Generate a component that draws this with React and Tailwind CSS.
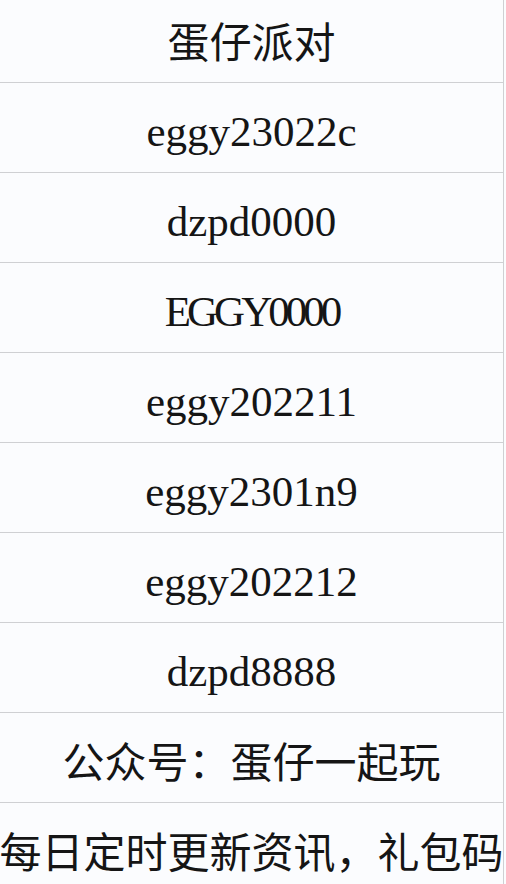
import React from 'react';

const rows = [
     { text: '蛋仔派对', cjk: true },
     { text: 'eggy23022c' },
     { text: 'dzpd0000' },
     { text: 'EGGY0000', tight: true },
     { text: 'eggy202211' },
     { text: 'eggy2301n9' },
     { text: 'eggy202212' },
     { text: 'dzpd8888' },
     { text: '公众号：蛋仔一起玩', cjk: true },
     { text: '每日定时更新资讯，礼包码', cjk: true },
];

export default function App() {
     return (
          <div className="w-[506px] h-[884px] overflow-hidden bg-[#fbfcfe]">
               <div className="w-[504px] border-r border-[#cfd0d3] -mt-[7px]">
                    {rows.map((row, i) => (
                         <div
                              key={i}
                              className="h-[90px] flex items-center justify-center border-b border-[#cfd0d3] whitespace-nowrap overflow-hidden text-[#151515]"
                         >
                              {row.cjk ? (
                                   <span className="pt-1 text-[42px] font-['Noto_Sans_CJK_SC',sans-serif]">
                                        {row.text}
                                   </span>
                              ) : (
                                   <span
                                        className={
                                             row.tight
                                                  ? "pt-[10px] text-[43px] tracking-[-4px] font-['Liberation_Serif',serif]"
                                                  : "pt-[10px] text-[43px] font-['Liberation_Serif',serif]"
                                        }
                                   >
                                        {row.text}
                                   </span>
                              )}
                         </div>
                    ))}
               </div>
          </div>
     );
}
